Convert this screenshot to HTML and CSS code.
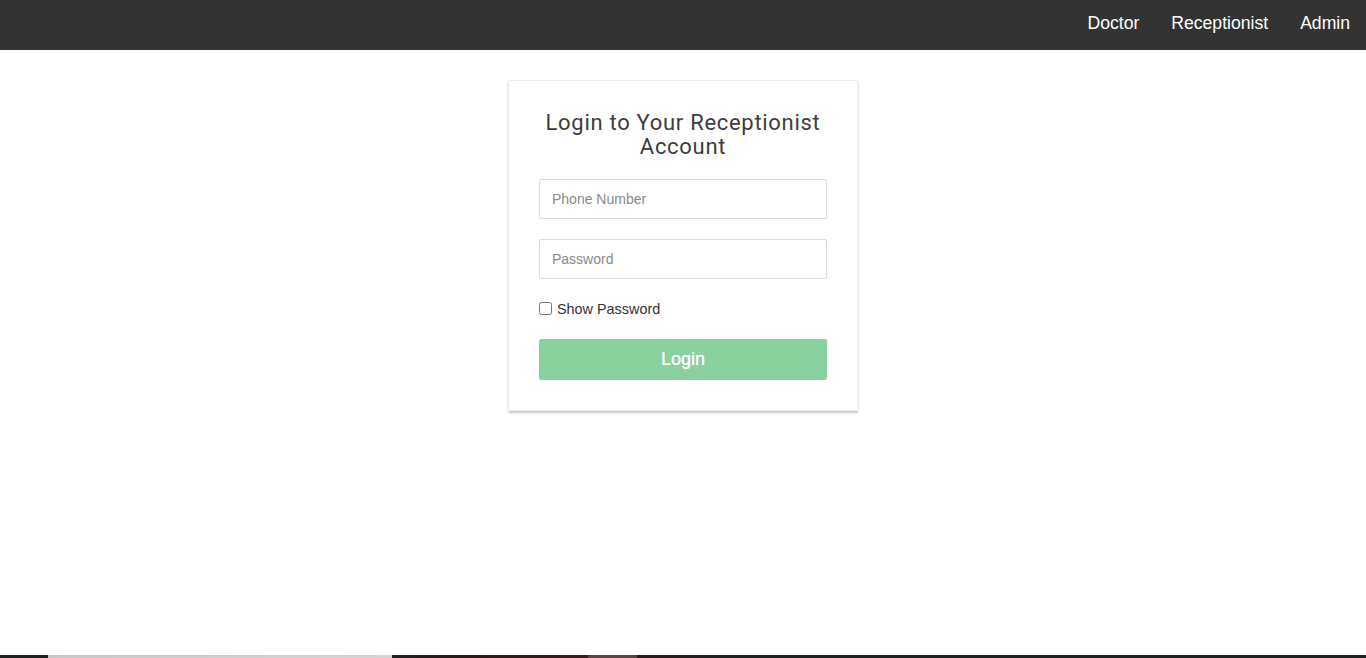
FILE: index.html
```html
<!DOCTYPE html>
<html>
<head>
<meta charset="utf-8">
<link rel="stylesheet" href="styles.css">
</head>
<body>
<nav class="navbar">
  <a href="#">Doctor</a>
  <a href="#">Receptionist</a>
  <a href="#">Admin</a>
</nav>
<main class="main">
  <form class="card">
    <h2 class="title">Login to Your Receptionist Account</h2>
    <input class="field" type="text" placeholder="Phone Number">
    <input class="field" type="password" placeholder="Password">
    <label class="show"><input type="checkbox" class="check"> Show Password</label>
    <button type="button" class="btn">Login</button>
  </form>
</main>
<div class="strip"></div>
</body>
</html>
```

FILE: styles.css
```css
html, body {
  margin: 0;
  padding: 0;
  height: 100%;
  background: #fff;
  font-family: Arial, "Liberation Sans", sans-serif;
  overflow: hidden;
}
body {
  display: flex;
  flex-direction: column;
}
.navbar {
  height: 50px;
  background: #333;
  display: flex;
  justify-content: flex-end;
  align-items: flex-start;
  flex: none;
}
.navbar a {
  color: #fff;
  text-decoration: none;
  font-size: 17.6px;
  padding: 0 16px;
  line-height: 46px;
}
.main {
  flex: 1;
  display: flex;
  justify-content: center;
  align-items: flex-start;
  padding-top: 30px;
}
.card {
  width: 288px;
  padding: 30px;
  background: #fff;
  border: 1px solid #eee;
  box-shadow: 0 2px 2px rgba(0,0,0,0.22);
  display: flex;
  flex-direction: column;
}
.title {
  margin: 0 0 20px;
  font-family: Roboto, "Noto Sans", sans-serif;
  font-weight: 400;
  font-size: 22px;
  line-height: 24px;
  color: #3d3d3d;
  text-align: center;
  letter-spacing: 0.7px;
}
.field {
  box-sizing: border-box;
  height: 40px;
  width: 100%;
  border: 1px solid #ddd;
  border-radius: 2px;
  padding: 0 12px;
  font-family: Arial, "Liberation Sans", sans-serif;
  font-size: 14px;
  margin: 0 0 20px;
  outline: none;
}
.field::placeholder {
  color: #8a8a8a;
}
.show {
  display: flex;
  align-items: center;
  font-size: 14.4px;
  color: #333;
  height: 20px;
  margin: 0 0 20px;
}
.check {
  margin: 0 5px 2px 0;
  width: 13px;
  height: 13px;
}
.btn {
  height: 41px;
  width: 100%;
  background: #8bd1a0;
  border: none;
  border-radius: 2px;
  color: #fff;
  font-family: Arial, "Liberation Sans", sans-serif;
  font-size: 18px;
  font-weight: 400;
  text-shadow: 0 0 0.4px #fff;
}
.strip {
  height: 3px;
  flex: none;
  background: linear-gradient(to right,
    #1f2020 0, #1f2020 48px,
    #c8c8c8 48px, #d4d4d4 392px,
    #202020 392px, #2e1818 470px, #3a1c1c 588px,
    #5a4444 588px, #5a4444 637px,
    #2c1c1c 637px, #1f2020 720px, #1f2020 100%);
}
```
